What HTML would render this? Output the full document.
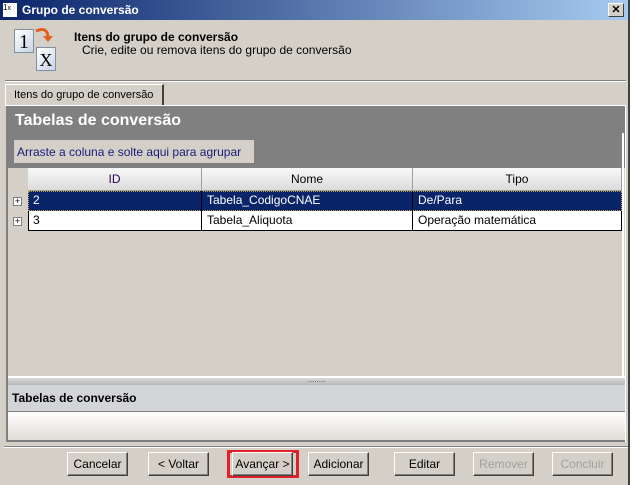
<!DOCTYPE html><html><head><style>
*{margin:0;padding:0;box-sizing:border-box}
body{width:635px;height:485px;background:#d4d0c8;font-family:"Liberation Sans",sans-serif;font-size:12px;position:relative;overflow:hidden}
.a{position:absolute;white-space:nowrap}
.btn{position:absolute;top:452px;height:24px;width:61px;background:#d4d0c8;border:1px solid;border-color:#fff #404040 #404040 #fff;box-shadow:inset -1px -1px #808080;text-align:center;line-height:22px;font-size:12px;color:#000;white-space:nowrap}
.dis{color:#a0a0a0}
.hd{position:absolute;top:168px;height:23px;background:linear-gradient(#f8f8f8,#dcdcdc);border-right:1px solid #a0a0a0;border-bottom:1px solid #a0a0a0;text-align:center;line-height:22px;color:#000;font-size:12px}
.c{position:absolute;height:20px;line-height:19px;padding-left:5px;border-right:1px solid #000;font-size:12px;white-space:nowrap}
.pl{position:absolute;left:13px;width:9px;height:9px;border:1px solid #808080;background:#fff;font-size:9px;line-height:7px;text-align:center;color:#000}
</style></head><body>
<div class="a" style="left:628px;top:0;width:7px;height:485px;background:#fff;border-left:2px solid #404040"></div>
<div class="a" style="left:0;top:0;width:628px;height:20px;background:linear-gradient(90deg,#0a246a,#a6caf0)"></div>
<div class="a" style="left:3px;top:3px;width:14px;height:14px;background:#fff;font-size:8px;color:#000">1<span style="font-size:7px">x</span></div>
<div class="a" style="left:22px;top:3px;color:#fff;font-weight:bold;font-size:12px">Grupo de conversão</div>
<div class="a" style="left:608px;top:3px;width:16px;height:14px;background:#d4d0c8;border:1px solid;border-color:#fff #404040 #404040 #fff;font-size:11px;font-weight:bold;text-align:center;line-height:12px">✕</div>
<div class="a" style="left:14px;top:29px;width:20px;height:24px;background:linear-gradient(135deg,#fff,#c8d4e8);border:1px solid #8090a0;font-family:'Liberation Serif';font-size:20px;text-align:center;line-height:24px">1</div>
<div class="a" style="left:36px;top:47px;width:20px;height:24px;background:linear-gradient(135deg,#fff,#c8d4e8);border:1px solid #8090a0;font-family:'Liberation Serif';font-size:18px;text-align:center;line-height:24px">X</div>
<svg class="a" style="left:34px;top:26px" width="20" height="20"><path d="M2 5 Q14 0 14 12" stroke="#e06020" stroke-width="3" fill="none"/><path d="M9 10 L14 16 L19 10Z" fill="#e06020"/></svg>
<div class="a" style="left:74px;top:30px;font-weight:bold;font-size:12px">Itens do grupo de conversão</div>
<div class="a" style="left:82px;top:43px;font-size:12px">Crie, edite ou remova itens do grupo de conversão</div>
<div class="a" style="left:5px;top:80px;width:621px;height:2px;border-top:1px solid #808080;border-bottom:1px solid #fff"></div>
<div class="a" style="left:5px;top:84px;width:159px;height:22px;border-top:1px solid #fff;border-left:1px solid #fff;border-right:2px solid #404040;padding-left:8px;line-height:20px;font-size:11px">Itens do grupo de conversão</div>
<div class="a" style="left:5px;top:105px;width:621px;height:1px;background:#fff"></div>
<div class="a" style="left:6px;top:106px;width:620px;height:336px;background:#d4d0c8;border-left:2px solid #808080;border-right:1px solid #fff"></div>
<div class="a" style="left:8px;top:106px;width:617px;height:62px;background:#808080"></div>
<div class="a" style="left:15px;top:112px;color:#fff;font-weight:bold;font-size:16px">Tabelas de conversão</div>
<div class="a" style="left:14px;top:140px;width:240px;height:23px;background:#d4d0c8;color:#1a1a7a;line-height:24px;padding-left:3px;font-size:12px">Arraste a coluna e solte aqui para agrupar</div>
<div class="a" style="left:622px;top:133px;width:2px;height:245px;background:#fff"></div>
<div class="hd" style="left:28px;width:174px;color:#300050">ID</div>
<div class="hd" style="left:202px;width:211px">Nome</div>
<div class="hd" style="left:413px;width:209px">Tipo</div>
<div class="a" style="left:28px;top:191px;width:594px;height:20px;background:#0a246a;border:1px dotted #c0a040"></div>
<div class="a" style="left:28px;top:211px;width:594px;height:20px;background:#fff;border:1px solid #000;border-top:none"></div>
<div class="c" style="left:28px;top:191px;width:174px;color:#fff">2</div>
<div class="c" style="left:202px;top:191px;width:211px;color:#fff">Tabela_CodigoCNAE</div>
<div class="c" style="left:413px;top:191px;width:209px;color:#fff;border:none">De/Para</div>
<div class="c" style="left:28px;top:211px;width:174px">3</div>
<div class="c" style="left:202px;top:211px;width:211px">Tabela_Aliquota</div>
<div class="c" style="left:413px;top:211px;width:209px;border:none">Operação matemática</div>
<div class="pl" style="top:197px">+</div><div class="pl" style="top:217px">+</div>
<div class="a" style="left:8px;top:376px;width:617px;height:2px;background:#fff"></div>
<div class="a" style="left:8px;top:378px;width:617px;height:7px;background:linear-gradient(#d8d8d8,#b8b8b8);text-align:center;font-size:8px;line-height:4px;color:#404040">........</div>
<div class="a" style="left:8px;top:385px;width:617px;height:27px;background:#d3d4d8;border-bottom:1px solid #808080;padding-left:4px;line-height:27px;font-weight:bold;font-size:12px">Tabelas de conversão</div>
<div class="a" style="left:8px;top:412px;width:617px;height:30px;background:linear-gradient(#fff,#e0ddd6);border-bottom:2px solid #808080"></div>
<div class="a" style="left:4px;top:446px;width:624px;height:2px;border-top:1px solid #808080;border-bottom:1px solid #fff"></div>
<div class="btn" style="left:67px">Cancelar</div>
<div class="btn" style="left:148px">&lt; Voltar</div>
<div class="a" style="left:227px;top:450px;width:72px;height:28px;border:3px solid #e0202a"></div>
<div class="btn" style="left:232px">Avançar &gt;</div>
<div class="btn" style="left:308px">Adicionar</div>
<div class="btn" style="left:394px">Editar</div>
<div class="btn dis" style="left:473px">Remover</div>
<div class="btn dis" style="left:552px">Concluir</div>
</body></html>
